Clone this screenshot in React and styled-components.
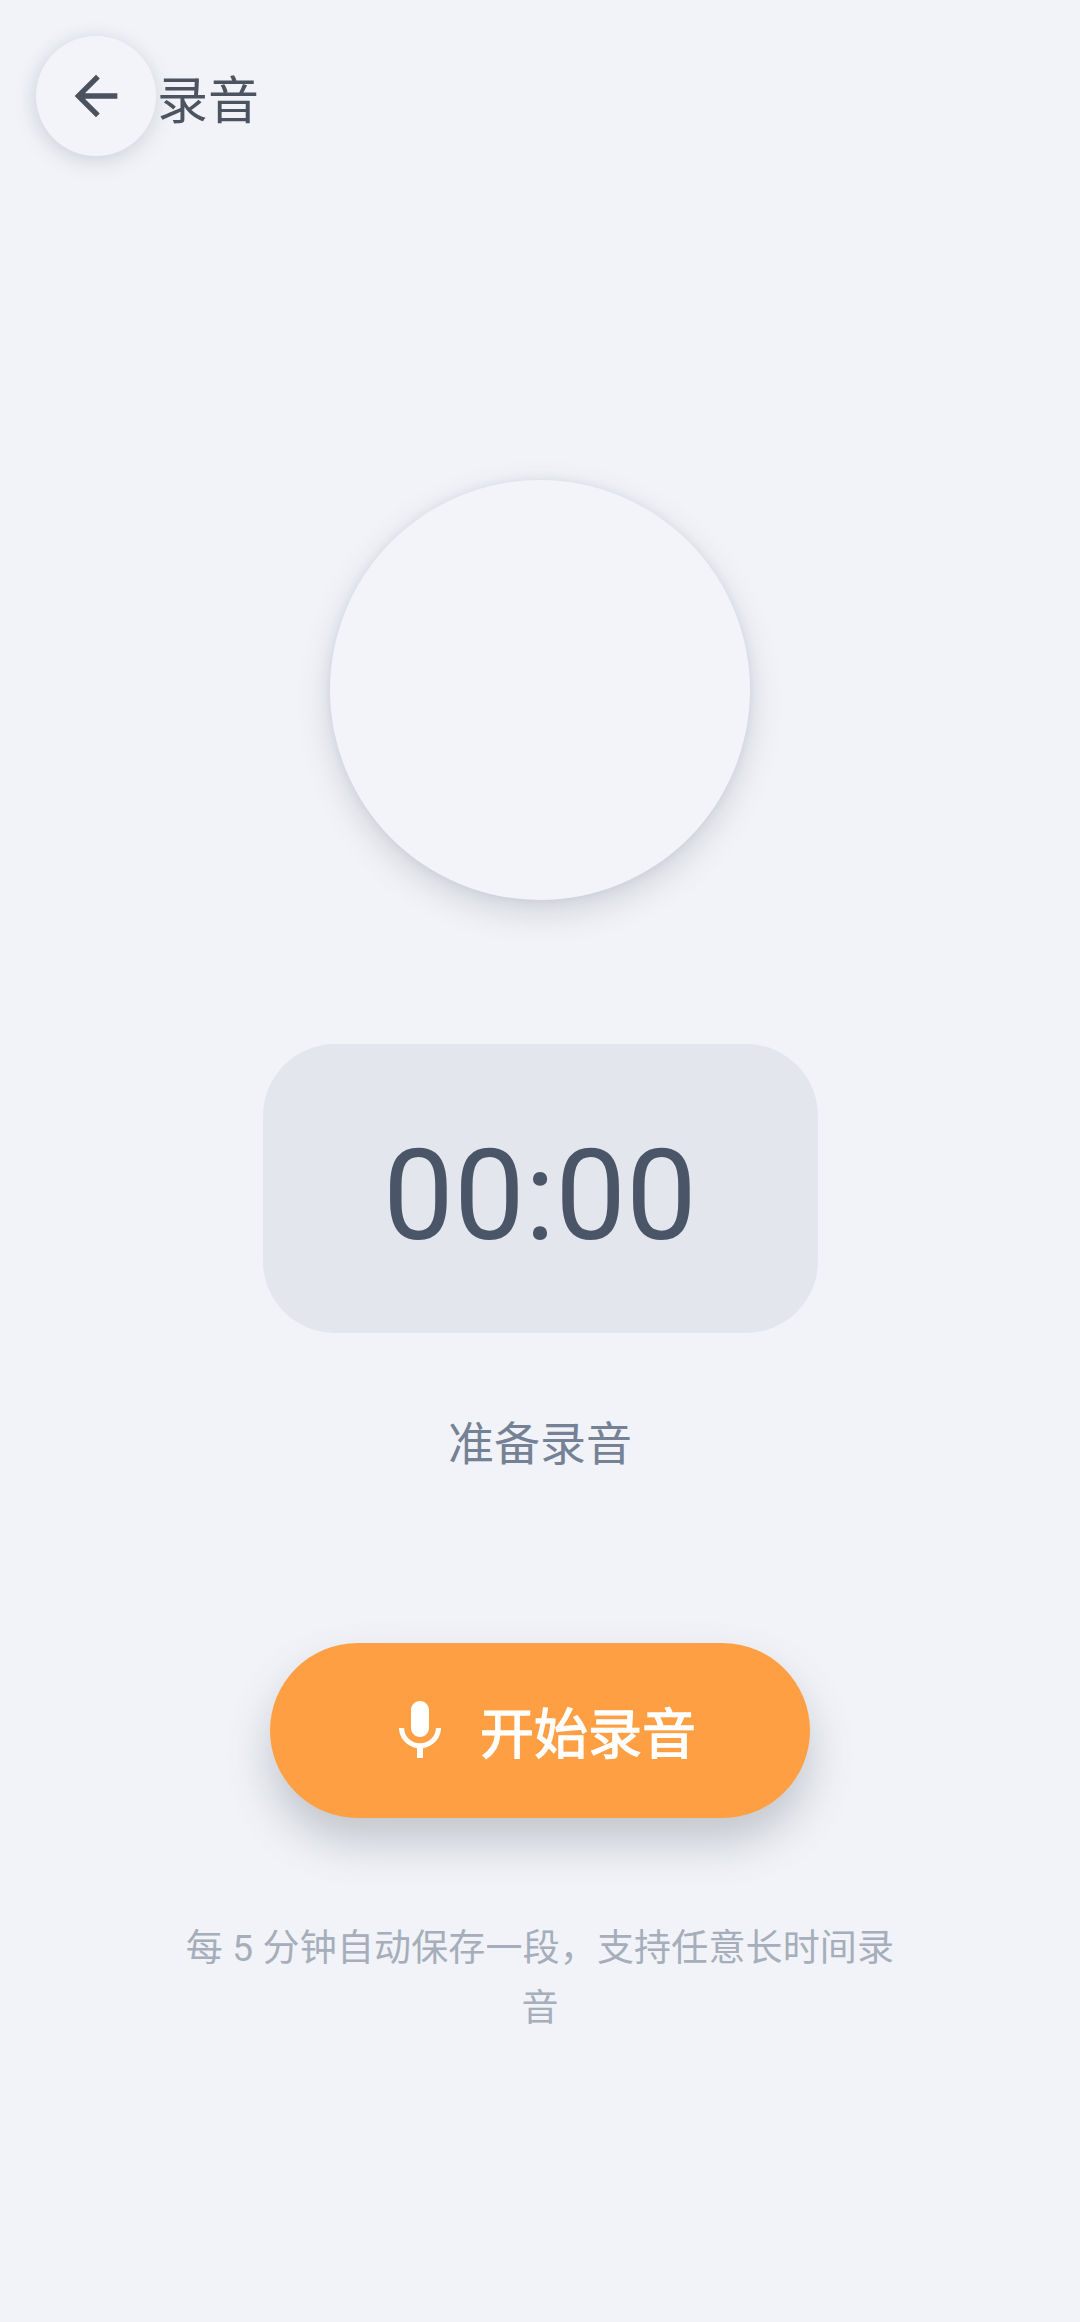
import React from "react";
import styled, { createGlobalStyle } from "styled-components";

const GlobalStyle = createGlobalStyle`
  html, body {
    margin: 0;
    padding: 0;
    background: #f1f3f8;
  }
`;

const Page = styled.div`
  display: flex;
  flex-direction: column;
  width: 1080px;
  height: 2322px;
  overflow: hidden;
  background: #f1f3f8;
  font-family: Roboto, "Noto Sans CJK SC", sans-serif;
`;

const Header = styled.header`
  display: flex;
  align-items: center;
  gap: 1px;
  padding: 36px 36px 0;
`;

const BackButton = styled.button`
  display: flex;
  align-items: center;
  justify-content: center;
  width: 120px;
  height: 120px;
  padding: 0;
  border: none;
  border-radius: 50%;
  background: #f3f4f9;
  color: #4a5160;
  box-shadow: 0 6px 22px rgba(90, 95, 105, 0.17), -3px 0 16px rgba(90, 95, 105, 0.07);
`;

const Title = styled.h1`
  margin: 11px 0 0;
  color: #4d5461;
  font-size: 51px;
  font-weight: 400;
  line-height: 64px;
`;

const Main = styled.main`
  display: flex;
  flex-direction: column;
  align-items: center;
  padding-top: 324px;
`;

const Disc = styled.div`
  width: 420px;
  height: 420px;
  border-radius: 50%;
  background: #f2f4f9;
  box-shadow: 0 12px 32px rgba(90, 95, 105, 0.22), 0 0 10px rgba(90, 95, 105, 0.1);
`;

const TimerCard = styled.div`
  display: flex;
  align-items: center;
  justify-content: center;
  box-sizing: border-box;
  width: 555px;
  height: 289px;
  margin-top: 144px;
  padding-top: 14px;
  border-radius: 72px;
  background: #e4e6ee;
`;

const TimerText = styled.div`
  color: #4a5568;
  font-size: 126px;
  line-height: 148px;
`;

const Status = styled.div`
  margin-top: 81px;
  color: #758195;
  font-size: 46px;
  line-height: 60px;
`;

const StartButton = styled.button`
  display: flex;
  align-items: center;
  justify-content: center;
  gap: 24px;
  width: 540px;
  height: 175px;
  margin-top: 169px;
  padding: 0;
  border: none;
  border-radius: 88px;
  background: #ff9f43;
  color: #ffffff;
  font-family: inherit;
  font-size: 54px;
  font-weight: 400;
  -webkit-text-stroke: 1.3px #ffffff;
  box-shadow: 0 24px 44px rgba(90, 96, 104, 0.3);
`;

const Hint = styled.p`
  width: 720px;
  margin: 101px 0 0;
  color: #a5aeba;
  font-size: 37px;
  letter-spacing: 0.15px;
  line-height: 60px;
  text-align: center;
`;

function ArrowBack() {
  return (
    <svg width="64" height="64" viewBox="0 0 24 24" fill="currentColor">
      <path d="M20 11H7.83l5.59-5.59L12 4l-8 8 8 8 1.41-1.41L7.83 13H20v-2z" />
    </svg>
  );
}

function Mic() {
  return (
    <svg width="72" height="72" viewBox="0 0 24 24" fill="currentColor">
      <path d="M12 14c1.66 0 2.99-1.34 2.99-3L15 5c0-1.66-1.34-3-3-3S9 3.34 9 5v6c0 1.66 1.34 3 3 3zm5.3-3c0 3-2.54 5.1-5.3 5.1S6.7 14 6.7 11H5c0 3.41 2.72 6.23 6 6.72V21h2v-3.28c3.28-.48 6-3.3 6-6.72h-1.7z" />
    </svg>
  );
}

export default function App() {
  return (
    <Page>
      <GlobalStyle />
      <Header>
        <BackButton aria-label="返回">
          <ArrowBack />
        </BackButton>
        <Title>录音</Title>
      </Header>
      <Main>
        <Disc />
        <TimerCard>
          <TimerText>00:00</TimerText>
        </TimerCard>
        <Status>准备录音</Status>
        <StartButton>
          <Mic />
          开始录音
        </StartButton>
        <Hint>每 5 分钟自动保存一段，支持任意长时间录音</Hint>
      </Main>
    </Page>
  );
}
